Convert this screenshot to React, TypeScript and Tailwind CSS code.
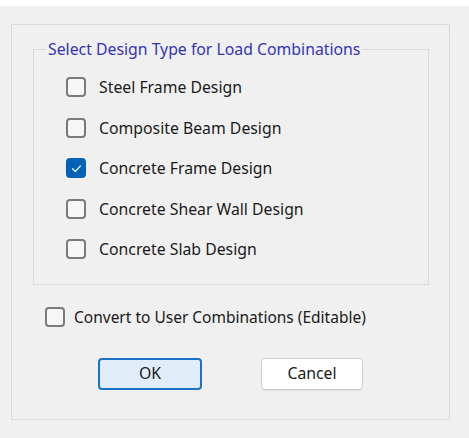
import { useState } from "react";

const options = [
  "Steel Frame Design",
  "Composite Beam Design",
  "Concrete Frame Design",
  "Concrete Shear Wall Design",
  "Concrete Slab Design",
];

function Box({ checked, onClick }: { checked: boolean; onClick: () => void }) {
  return (
    <button
      type="button"
      onClick={onClick}
      className={
        checked
          ? "flex h-[20px] w-[20px] shrink-0 items-center justify-center rounded-[4px] bg-[#0063b8]"
          : "h-[20px] w-[20px] shrink-0 rounded-[4px] border-2 border-[#7a7a7a] bg-[#f7f7f7]"
      }
    >
      {checked && (
        <svg viewBox="0 0 12 12" className="h-[13px] w-[13px]" fill="none" stroke="#dce9f7" strokeWidth="1.3">
          <path d="M2.4 6.3 L4.9 8.7 L9.6 3.6" strokeLinecap="round" strokeLinejoin="round" />
        </svg>
      )}
    </button>
  );
}

export default function App() {
  const [selected, setSelected] = useState<number[]>([2]);
  const [convert, setConvert] = useState(false);

  const toggle = (i: number) =>
    setSelected((s) => (s.includes(i) ? s.filter((x) => x !== i) : [...s, i]));

  return (
    <div
      className="h-[438px] w-[469px] bg-white pt-[6px] text-[15.8px] text-[#1a1a1a]"
      style={{ fontFamily: '"Noto Sans", "Open Sans", sans-serif' }}
    >
      <div className="h-[432px] bg-[#f0f0f0] pl-[11px] pr-[19px] pt-[18px]">
        <div className="h-[396px] border border-[#dadada] pl-[21px] pr-[20px] pt-[24px]">
          {/* group box */}
          <div className="relative h-[236px] border border-[#dadada] pl-[32px] pt-[27px]">
            <span className="absolute left-[12px] top-[-11px] bg-[#f0f0f0] px-[2px] leading-[20px] text-[#3333b8]">
              Select Design Type for Load Combinations
            </span>
            <div className="flex flex-col gap-[20.5px]">
              {options.map((o, i) => (
                <label key={o} className="flex h-[20px] items-center gap-[13px]">
                  <Box checked={selected.includes(i)} onClick={() => toggle(i)} />
                  <span className="leading-[20px]">{o}</span>
                </label>
              ))}
            </div>
          </div>

          <label className="ml-[12px] mt-[22px] flex h-[20px] items-center gap-[9px]">
            <Box checked={convert} onClick={() => setConvert(!convert)} />
            <span className="text-[15.5px] leading-[20px]">Convert to User Combinations (Editable)</span>
          </label>

          <div className="mt-[31px] flex gap-[59px] pl-[65px]">
            <button className="h-[32px] w-[104px] rounded-[4px] border-2 border-[#1a73c9] bg-[#e1eefa]">
              OK
            </button>
            <button className="h-[32px] w-[102px] rounded-[4px] border border-[#d0d0d0] bg-white shadow-[0_1px_1px_rgba(0,0,0,0.08)]">
              Cancel
            </button>
          </div>
        </div>
      </div>
    </div>
  );
}
